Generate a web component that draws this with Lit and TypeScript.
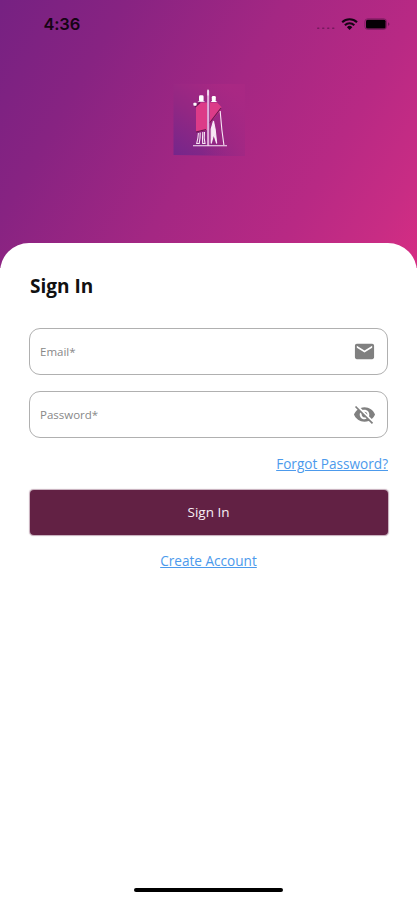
import { LitElement, html, css } from "lit";
import { customElement } from "lit/decorators.js";

@customElement("status-bar")
class StatusBar extends LitElement {
  static styles = css`
    :host { display: flex; justify-content: space-between; height: 48px; padding: 0 26px 0 43.5px; align-items: center; box-sizing: border-box; }
    .time { font: 600 16.5px/20px Inter, sans-serif; color: #160414; letter-spacing: -0.2px; }
    svg { display: block; }
  `;
  render() {
    return html`
      <span class="time">4:36</span>
      <svg width="74" height="16" viewBox="317 16 74 16">
        <g fill="#5f1650" opacity=".7">
          <rect x="317" y="27.500" width="2.500" height="1.400" rx=".7" />
          <rect x="322" y="27.500" width="2.500" height="1.400" rx=".7" />
          <rect x="327" y="27.500" width="2.500" height="1.400" rx=".7" />
          <rect x="332" y="27.500" width="2.500" height="1.400" rx=".7" />
        </g>
        <g fill="none" stroke="#160414" stroke-width="2.100">
          <path d="M342.200 22.300a10.600 10.600 0 0 1 14.800 0" />
          <path d="M344.900 25.200a6.700 6.700 0 0 1 9.400 0" />
        </g>
        <path d="M349.600 30l-2.700-2.800a3.800 3.800 0 0 1 5.400 0z" fill="#160414" />
        <rect x="364.900" y="18.800" width="21.600" height="10.600" rx="2.800" fill="none" stroke="#5f1650" stroke-opacity=".6" />
        <rect x="366" y="19.700" width="19.600" height="8.800" rx="1.500" fill="#050005" />
        <path d="M388 22.200q3 1.900 0 3.800z" fill="#5f1650" fill-opacity=".7" />
      </svg>`;
  }
}

@customElement("brand-logo")
class BrandLogo extends LitElement {
  static styles = css`
    :host { display: block; width: 72px; height: 72px; }
    svg { display: block; }
  `;
  render() {
    return html`
      <svg width="72" height="72" viewBox="172 84 72 72">
        <defs>
          <linearGradient id="tile" x1="0" y1="1" x2=".75" y2="0">
            <stop offset="0" stop-color="#74268b" />
            <stop offset=".5" stop-color="#932783" />
            <stop offset="1" stop-color="#aa2883" />
          </linearGradient>
          <linearGradient id="fade" x1="0" y1="0" x2="1" y2="0">
            <stop offset=".4" stop-color="#a82884" stop-opacity="0" />
            <stop offset="1" stop-color="#a82884" stop-opacity=".75" />
          </linearGradient>
        </defs>
        <path d="M172.500 84H244v72l-71.500-1z" fill="url(#tile)" />
        <path d="M172.500 84H244v72l-71.500-1z" fill="url(#fade)" />
        <path d="M195 107l5-4.500h6v27.500l-11 2z" fill="#dc3b88" />
        <path d="M209 102.500h7l4.500 4.500-1.500 4-10 12z" fill="#dc3b88" />
        <path d="M194 107l5-4.500M220 108l-11.500 15M195 132l10-2.500" fill="none" stroke="#681650" stroke-width="1.100" />
        <g fill="#fff">
          <rect x="198" y="95.300" width="4.600" height="6" rx="1.400" />
          <path d="M196.500 101.800l1.700-1h4.500l1.300 1z" />
          <rect x="210.800" y="96" width="4" height="5.400" rx="1.300" />
          <path d="M209.700 101.900l1.100-.8h4l1.500.8z" />
          <rect x="192.400" y="102.700" width="3.200" height="3" rx=".8" />
        </g>
        <rect x="206.100" y="90" width="2.100" height="56" rx="1" fill="#e0addb" />
        <path d="M206.500 89.500h1v6h-1z" fill="#fff" />
        <g fill="none" stroke="#f8e7f5" stroke-width="1.100">
          <path d="M192 145.700h34" />
          <path d="M197.400 133l-.5 5-1.200 5.500h2.500l.8-5.500.2-5.500M201.800 132l-.3 6 .2 5.500h2.300l-.8-5.500.3-6" />
          <path d="M212.500 121l-2.300 8v14.500l2.500-9.500 3 9.500-1.500-14z" fill="#f8e7f5" />
          <path d="M219.200 111l.5 6 1.200 13 2 15" />
        </g>
      </svg>`;
  }
}

@customElement("app-root")
class AppRoot extends LitElement {
  static styles = css`
    :host {
      display: block; width: 417px; height: 900px; overflow: hidden; box-sizing: border-box;
      background: #fff; font-family: "Open Sans", sans-serif;
    }
    .page { display: flex; flex-direction: column; height: 900px; }
    .hero {
      height: 268px; flex: none; display: flex; flex-direction: column;
      background: linear-gradient(120deg, #762182 0%, #872382 22%, #a42783 50%, #b82984 74%, #c82c84 90%, #d62d83 100%);
    }
    brand-logo { margin: 36px auto 0; }
    .sheet {
      flex: 1; display: flex; flex-direction: column; margin-top: -25px; padding: 0 29px 8px;
      border-radius: 29px 29px 0 0; background: #fff; box-sizing: border-box;
    }
    h1 { margin: 29px 0 0 1px; font-size: 19px; line-height: 28px; font-weight: 700; color: #111; letter-spacing: 0; }
    .field {
      display: flex; align-items: center; justify-content: space-between; height: 47px; box-sizing: border-box;
      padding: 0 11px 0 10px; border: 1px solid #b0b0b0; border-radius: 11px; font-size: 11.5px; color: #888;
    }
    .email { margin-top: 28px; }
    .password { margin-top: 16px; }
    .field svg { display: block; fill: #808080; }
    a { color: #4c9aec; font-size: 13.6px; line-height: 18px; text-decoration: underline; text-underline-offset: 1px; }
    .forgot { align-self: flex-end; margin-top: 17px; }
    button {
      height: 45px; margin: 17px 0.5px 0; border: 0; border-radius: 4px; padding: 0 0 1px; background: #622144;
      box-shadow: 0 0 1px 0.3px #62214460; color: #f8eff4; font: 500 13.5px/18px "Open Sans", sans-serif;
    }
    .create { align-self: center; margin-top: 17px; }
    .home { width: 149px; height: 4px; border-radius: 2px; background: #000; margin: auto auto 0; }
  `;
  render() {
    return html`
      <div class="page">
        <div class="hero">
          <status-bar></status-bar>
          <brand-logo></brand-logo>
        </div>
        <main class="sheet">
          <h1>Sign In</h1>
          <div class="field email">
            <span>Email*</span>
            <svg width="23" height="23" viewBox="0 0 24 24"><path d="M20 4H4c-1.100 0-1.990.9-1.990 2L2 18c0 1.100.9 2 2 2h16c1.100 0 2-.9 2-2V6c0-1.100-.9-2-2-2zm0 4l-8 5-8-5V6l8 5 8-5v2z" /></svg>
          </div>
          <div class="field password">
            <span>Password*</span>
            <svg width="23" height="23" viewBox="0 0 24 24"><path d="M12 7c2.760 0 5 2.240 5 5 0 .65-.13 1.260-.36 1.830l2.920 2.920c1.510-1.260 2.700-2.890 3.430-4.750-1.730-4.390-6-7.500-11-7.500-1.400 0-2.740.25-3.980.7l2.160 2.160C10.740 7.130 11.350 7 12 7zM2 4.270l2.280 2.280.46.46C3.080 8.300 1.780 10.020 1 12c1.730 4.390 6 7.500 11 7.500 1.550 0 3.030-.3 4.380-.84l.42.42L19.730 22 21 20.730 3.270 3 2 4.270zM7.530 9.800l1.550 1.550c-.05.21-.08.43-.08.65 0 1.660 1.340 3 3 3 .22 0 .44-.03.65-.08l1.550 1.550c-.67.33-1.410.53-2.200.53-2.760 0-5-2.240-5-5 0-.79.2-1.530.53-2.200zm4.310-.78l3.150 3.150.02-.16c0-1.660-1.340-3-3-3l-.17.01z" /></svg>
          </div>
          <a class="forgot">Forgot Password?</a>
          <button>Sign In</button>
          <a class="create">Create Account</a>
          <div class="home"></div>
        </main>
      </div>`;
  }
}
